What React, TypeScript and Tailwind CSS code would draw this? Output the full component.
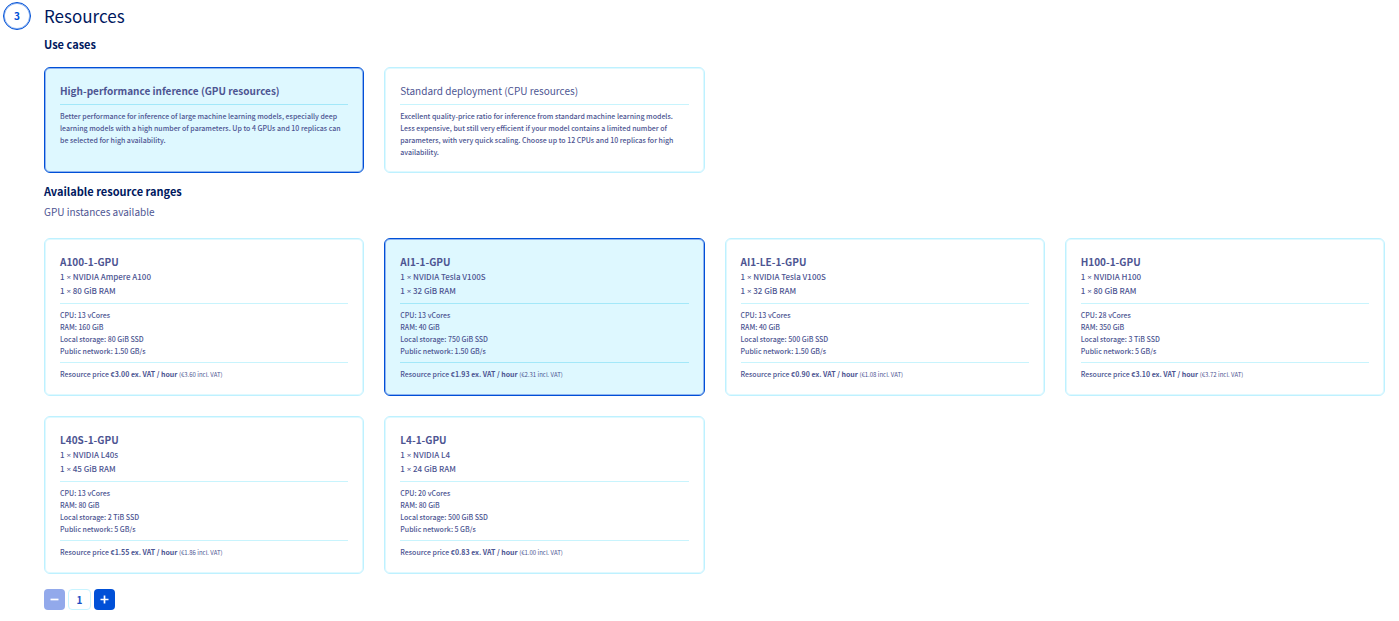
import { useState } from "react";
import type { ReactNode } from "react";

interface UseCase {
  id: string;
  title: string;
  text: string;
}

interface Flavor {
  name: string;
  gpu: string;
  memory: string;
  cpu: string;
  ram: string;
  storage: string;
  network: string;
  price: string;
  taxedPrice: string;
}

const useCases: UseCase[] = [
  {
    id: "gpu",
    title: "High-performance inference (GPU resources)",
    text: "Better performance for inference of large machine learning models, especially deep learning models with a high number of parameters. Up to 4 GPUs and 10 replicas can be selected for high availability.",
  },
  {
    id: "cpu",
    title: "Standard deployment (CPU resources)",
    text: "Excellent quality-price ratio for inference from standard machine learning models. Less expensive, but still very efficient if your model contains a limited number of parameters, with very quick scaling. Choose up to 12 CPUs and 10 replicas for high availability.",
  },
];

const flavors: Flavor[] = [
  { name: "A100-1-GPU", gpu: "NVIDIA Ampere A100", memory: "80 GiB", cpu: "13", ram: "160 GiB", storage: "80 GiB", network: "1.50 GB/s", price: "€3.00", taxedPrice: "€3.60" },
  { name: "AI1-1-GPU", gpu: "NVIDIA Tesla V100S", memory: "32 GiB", cpu: "13", ram: "40 GiB", storage: "750 GiB", network: "1.50 GB/s", price: "€1.93", taxedPrice: "€2.31" },
  { name: "AI1-LE-1-GPU", gpu: "NVIDIA Tesla V100S", memory: "32 GiB", cpu: "13", ram: "40 GiB", storage: "500 GiB", network: "1.50 GB/s", price: "€0.90", taxedPrice: "€1.08" },
  { name: "H100-1-GPU", gpu: "NVIDIA H100", memory: "80 GiB", cpu: "28", ram: "350 GiB", storage: "3 TiB", network: "5 GB/s", price: "€3.10", taxedPrice: "€3.72" },
  { name: "L40S-1-GPU", gpu: "NVIDIA L40s", memory: "45 GiB", cpu: "13", ram: "80 GiB", storage: "2 TiB", network: "5 GB/s", price: "€1.55", taxedPrice: "€1.86" },
  { name: "L4-1-GPU", gpu: "NVIDIA L4", memory: "24 GiB", cpu: "20", ram: "80 GiB", storage: "500 GiB", network: "5 GB/s", price: "€0.83", taxedPrice: "€1.00" },
];

interface OptionCardProps {
  group: string;
  value: string;
  checked: boolean;
  onSelect: (value: string) => void;
  children: ReactNode;
}

function OptionCard({ group, value, checked, onSelect, children }: OptionCardProps) {
  return (
    <label
      className={`relative block cursor-pointer rounded-md border px-[15px] pt-[15px] pb-[14px] ${
        checked
          ? "border-[#0050d7] bg-[#def8ff] shadow-[inset_0_0_0_1px_#8fb4f0]"
          : "border-[#bef1ff] bg-white shadow-[inset_0_0_0_1px_#dff9ff]"
      }`}
    >
      <input
        type="radio"
        name={group}
        value={value}
        checked={checked}
        onChange={() => onSelect(value)}
        className="sr-only"
      />
      {children}
    </label>
  );
}

function Divider({ active }: { active: boolean }) {
  return <span className={`my-[5px] block h-px ${active ? "bg-[#a3e8f9]" : "bg-[#c8f4fd]"}`} />;
}

function Spec({ children }: { children: ReactNode }) {
  return <span className="block text-[7px] leading-3 font-medium">{children}</span>;
}

function Hardware({ children }: { children: ReactNode }) {
  return (
    <span className="block text-[8px] leading-[14px] font-medium">
      1 <span className="font-['Open_Sans',sans-serif]">×</span> {children}
    </span>
  );
}

export default function App() {
  const [useCase, setUseCase] = useState("gpu");
  const [flavor, setFlavor] = useState("AI1-1-GPU");
  const [count, setCount] = useState(1);

  return (
    <main className="flex gap-[13px] bg-white pt-[2px] pr-[14px] pl-[3px] font-['Noto_Sans_CJK_SC',sans-serif] text-[#4d5592]">
      <div className="flex size-7 shrink-0 items-center justify-center rounded-full border border-[#0050d7] text-[10px] leading-3 font-bold text-[#0050d7] shadow-[inset_0_0_0_1px_#8fb4f0]">
        3
      </div>
      <div className="min-w-0 flex-1">
        <h1 className="pt-[2px] text-[17px] leading-6 text-[#00185e]">Resources</h1>
        <h2 className="mt-2 text-[11px] leading-4 font-bold text-[#00185e]">Use cases</h2>

        <div className="mt-[15px] grid grid-cols-4 gap-5">
          {useCases.map((item) => {
            const checked = item.id === useCase;
            return (
              <OptionCard key={item.id} group="use-case" value={item.id} checked={checked} onSelect={setUseCase}>
                <span className={`block text-[10px] leading-4 ${checked ? "font-bold" : ""}`}>{item.title}</span>
                <Divider active={checked} />
                <span className="block pr-1 text-[7px] leading-3 font-medium">{item.text}</span>
              </OptionCard>
            );
          })}
        </div>

        <h2 className="mt-[10px] text-[11px] leading-4 font-bold text-[#00185e]">Available resource ranges</h2>
        <p className="mt-[5px] text-[10px] leading-4">GPU instances available</p>

        <div className="mt-[18px] grid grid-cols-4 gap-5">
          {flavors.map((item) => {
            const checked = item.name === flavor;
            return (
              <OptionCard key={item.name} group="flavor" value={item.name} checked={checked} onSelect={setFlavor}>
                <span className="block text-[10px] leading-4 font-bold">{item.name}</span>
                <Hardware>{item.gpu}</Hardware>
                <Hardware>{item.memory} RAM</Hardware>
                <Divider active={checked} />
                <Spec>CPU: {item.cpu} vCores</Spec>
                <Spec>RAM: {item.ram}</Spec>
                <Spec>Local storage: {item.storage} SSD</Spec>
                <Spec>Public network: {item.network}</Spec>
                <Divider active={checked} />
                <Spec>
                  Resource price <b>{item.price} ex. VAT / hour</b>{" "}
                  <small className="text-[6px] font-normal">({item.taxedPrice} incl. VAT)</small>
                </Spec>
              </OptionCard>
            );
          })}
        </div>

        <div className="mt-[15px] flex gap-[3px]">
          <button
            type="button"
            aria-label="Decrease"
            disabled={count <= 1}
            onClick={() => setCount(count - 1)}
            className="flex size-[21px] items-center justify-center rounded bg-[#0050d7] text-white disabled:bg-[#92a9eb]"
          >
            <svg viewBox="0 0 9 9" className="size-[9px]" fill="none" stroke="currentColor" strokeWidth="1.7">
              <path d="M0.5 4.5h8" />
            </svg>
          </button>
          <input
            type="text"
            inputMode="numeric"
            aria-label="Quantity"
            value={count}
            onChange={(e) => setCount(Math.max(1, Number(e.target.value) || 1))}
            className="h-[21px] w-[23px] rounded border border-[#c8f4ff] text-center text-[10px] leading-4 font-bold text-[#1a4fc4]"
          />
          <button
            type="button"
            aria-label="Increase"
            onClick={() => setCount(count + 1)}
            className="flex size-[21px] items-center justify-center rounded bg-[#0050d7] text-white"
          >
            <svg viewBox="0 0 9 9" className="size-[9px]" fill="none" stroke="currentColor" strokeWidth="1.7">
              <path d="M0.5 4.5h8M4.5 0.5v8" />
            </svg>
          </button>
        </div>
      </div>
    </main>
  );
}
